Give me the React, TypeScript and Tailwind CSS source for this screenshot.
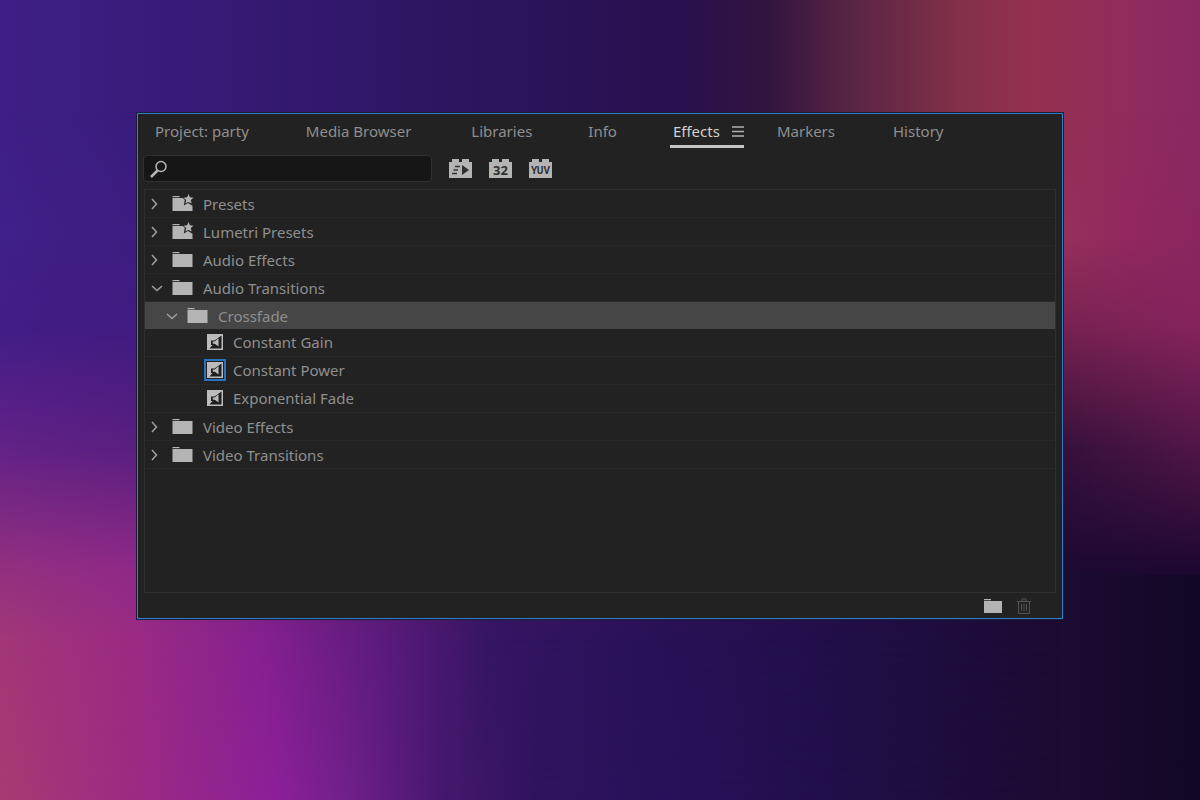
import { useState } from 'react';

const backdrop = [
  'bg-[linear-gradient(90deg,#3f1f87_0%,#3a1c7d_10%,#33186e_25%,#2c145c_42%,#28104f_56%,#33143f_64%,#592544_71%,#833048_80%,#95304f_86%,#902b5e_95%,#8a2865_100%)]',
  'bg-[linear-gradient(90deg,#40208a_0%,#3d1d80_11%,#2c145c_50%,#96315a_88%,#92285f_94%,#8b2560_100%)] [mask-image:linear-gradient(180deg,transparent_14%,black_28%)]',
  'bg-[linear-gradient(90deg,#421d88_0%,#411b80_11%,#2c145c_50%,#762250_88%,#85235e_100%)] [mask-image:linear-gradient(180deg,transparent_30%,black_41%)]',
  'bg-[linear-gradient(90deg,#632286_0%,#5a1f80_11%,#2c145c_50%,#35103b_88%,#511647_100%)] [mask-image:linear-gradient(180deg,transparent_41%,black_56%)]',
  'bg-[linear-gradient(90deg,#923080_0%,#8f2987_11%,#3d1560_40%,#1d0a32_88%,#1e0830_100%)] [mask-image:linear-gradient(180deg,transparent_56%,black_71%)]',
  'bg-[linear-gradient(90deg,#a23777_0%,#9a2a84_12%,#852091_22%,#5b1b7c_32%,#351565_41%,#2a1259_52%,#241050_63%,#1e0e43_75%,#1c0b32_88%,#130826_100%)] [mask-image:linear-gradient(180deg,transparent_71%,black_80%)]',
  'bg-[linear-gradient(90deg,#a83a72_0%,#9a2a84_12%,#8c1f98_23%,#70208a_29%,#45176e_37%,#2f135e_45%,#271159_57%,#1f0e45_73%,#1c0b32_88%,#120724_100%)] [mask-image:linear-gradient(180deg,transparent_80%,black_100%)]',
];

function Chevron({ open = false }: { open?: boolean }) {
  return (
    <svg viewBox="0 0 14 14" className="h-[14px] w-[14px] shrink-0 fill-none stroke-[#a0a0a0] stroke-[1.5]" aria-hidden="true">
      <path d={open ? 'M2 5l5 4.500 5-4.500' : 'M2 2l4.500 5L2 12'} />
    </svg>
  );
}

function Folder({ star = false }: { star?: boolean }) {
  return (
    <svg viewBox="0 0 22 18" className="h-[18px] w-[22px] shrink-0 fill-[#b4b4b4]" aria-hidden="true">
      <path d="M.5 2h7v1.200h-7z" />
      {star ? (
        <>
          <path d="M.5 4h10.300l2 2-1 5.500 4.200-2.500 4.500 2.800V17H.5z" />
          <path d="M16.500 0l1.400 3.300 3.600.4-2.700 2.400.8 3.500-3.100-1.700-3.100 1.700.8-3.500-2.700-2.400 3.600-.4z" />
        </>
      ) : (
        <path d="M.5 4h20v13H.5z" />
      )}
    </svg>
  );
}

function TransitionIcon({ selected = false }: { selected?: boolean }) {
  return (
    <span className={`flex h-[22px] w-[22px] shrink-0 items-center justify-center border-2 ${selected ? 'border-[#2a72bd]' : 'border-transparent'}`}>
      <svg viewBox="0 0 16 16" className="h-4 w-4" aria-hidden="true">
        <path d="M0 0h16v16H0z" fill="#bcbcbc" />
        <path d="M14.500 1.500v13H2.500l3-3.500H4V6.500h3.500z" fill="#1f1f1f" />
        <path d="M5.800 7.500h2L11.500 4v8.500L7.800 9.800h-2z" fill="#bcbcbc" />
      </svg>
    </span>
  );
}

function Badge({ kind }: { kind: 'fast' | '32' | 'YUV' }) {
  return (
    <svg viewBox="0 0 23 19" className="h-[19px] w-[23px]" aria-hidden="true">
      <path d="M0 3h3V0h7v3h3V0h7v3h3v16H0z" fill="#b4b4b4" />
      {kind === 'fast' ? (
        <>
          <path d="M13 6l7 5-7 5z" fill="#303030" />
          <path d="M6 7.500h5M4.500 11H9M3 14.500h5" stroke="#303030" strokeWidth="1.500" />
        </>
      ) : (
        <text
          x="11.500"
          y={kind === '32' ? 16 : 15}
          textAnchor="middle"
          fill="#303030"
          className={kind === '32' ? "font-['Noto_Sans'] text-[13px] font-bold" : "font-['Roboto'] text-[10px] font-bold"}
        >
          {kind}
        </text>
      )}
    </svg>
  );
}

const tabs = [
  { name: 'Project: party', gap: '' },
  { name: 'Media Browser', gap: 'ml-[57px]' },
  { name: 'Libraries', gap: 'ml-[60px]' },
  { name: 'Info', gap: 'ml-[56px]' },
  { name: 'Effects', gap: 'ml-[53px]' },
  { name: 'Markers', gap: 'ml-[33px]' },
  { name: 'History', gap: 'ml-[58px]' },
];

type Row = { name: string; kind: 'preset' | 'folder' | 'open' | 'child' | 'effect' };

const rows: Row[] = [
  { name: 'Presets', kind: 'preset' },
  { name: 'Lumetri Presets', kind: 'preset' },
  { name: 'Audio Effects', kind: 'folder' },
  { name: 'Audio Transitions', kind: 'open' },
  { name: 'Crossfade', kind: 'child' },
  { name: 'Constant Gain', kind: 'effect' },
  { name: 'Constant Power', kind: 'effect' },
  { name: 'Exponential Fade', kind: 'effect' },
  { name: 'Video Effects', kind: 'folder' },
  { name: 'Video Transitions', kind: 'folder' },
];

function TreeRow({ row }: { row: Row }) {
  const label = <span className="whitespace-nowrap">{row.name}</span>;
  if (row.kind === 'effect') {
    return (
      <li className="flex h-[28px] items-center gap-[7px] border-b border-[#282828] pb-0.5 pl-[59px]">
        <TransitionIcon selected={row.name === 'Constant Power'} />
        {label}
      </li>
    );
  }
  const open = row.kind === 'open' || row.kind === 'child';
  return (
    <li className={row.kind === 'child' ? 'h-[27px] bg-[#464646]' : 'h-[28px] border-b border-[#282828]'}>
      <button type="button" aria-expanded={open} className={`flex h-full w-full items-center ${row.kind === 'child' ? 'pl-5' : 'pl-[5px]'}`}>
        <Chevron open={open} />
        <span className="ml-2 mr-[9px] flex pb-0.5">
          <Folder star={row.kind === 'preset'} />
        </span>
        {label}
      </button>
    </li>
  );
}

export default function App() {
  const [active, setActive] = useState('Effects');
  const [query, setQuery] = useState('');

  return (
    <div className="relative isolate flex min-h-screen flex-col overflow-hidden px-[137px] pt-[113px] pb-[181px] font-['Noto_Sans',sans-serif] text-[15px] leading-5 text-[#8f8f8f]">
      <div className="absolute inset-0 -z-10" aria-hidden="true">
        {backdrop.map((layer) => (
          <div key={layer} className={`absolute inset-0 ${layer}`} />
        ))}
        <div className="absolute right-0 bottom-0 h-[225px] w-[140px] bg-linear-to-r from-[#1c0b32] to-[#120726]" />
      </div>

      <main className="flex flex-1 flex-col border border-[#2f7fc6] bg-[#222222] ring-1 ring-[#1b1c3a]">
        <nav className="flex h-[36px] pl-[17px]">
          {tabs.map((tab) => {
            const current = tab.name === active;
            return (
              <button
                key={tab.name}
                type="button"
                onClick={() => setActive(tab.name)}
                className={`flex h-[34px] items-center whitespace-nowrap ${tab.gap} ${tab.name === 'Effects' ? 'w-[74px] justify-between pl-[3px]' : ''} ${current ? 'border-b-3 border-[#c6c6c6] pt-[3px] text-[#d0d0d0]' : ''}`}
              >
                {tab.name}
                {tab.name === 'Effects' && (
                  <svg viewBox="0 0 12 12" className="h-3 w-3 stroke-[#b0b0b0] stroke-[1.5]" aria-hidden="true">
                    <path d="M0 2h12M0 6.500h12M0 11h12" />
                  </svg>
                )}
              </button>
            );
          })}
        </nav>

        <div className="flex h-[39px] items-center gap-[17px] pb-0.5 pl-[5px]">
          <div className="flex h-[27px] w-[289px] items-center rounded border border-[#303030] bg-[#161616] pl-[6px]">
            <svg viewBox="0 0 18 18" className="h-[18px] w-[18px] shrink-0 fill-none stroke-[#b4b4b4]" aria-hidden="true">
              <circle cx="11" cy="6.500" r="5" strokeWidth="1.500" />
              <path d="M7.500 10.500L1 17" strokeWidth="2.500" />
            </svg>
            <input
              type="text"
              aria-label="Search effects"
              value={query}
              onChange={(e) => setQuery(e.target.value)}
              className="min-w-0 flex-1 bg-transparent px-2 outline-none"
            />
          </div>
          <button type="button" aria-label="Accelerated effects"><Badge kind="fast" /></button>
          <button type="button" aria-label="32-bit color"><Badge kind="32" /></button>
          <button type="button" aria-label="YUV effects"><Badge kind="YUV" /></button>
        </div>

        <section className="mx-[6px] flex-1 border border-[#2f2f2f]">
          <ul>
            {rows.map((row) => (
              <TreeRow key={row.name} row={row} />
            ))}
          </ul>
        </section>

        <footer className="flex h-[25px] items-center justify-end gap-[13px] pr-[31px]">
          <button type="button" aria-label="New custom bin">
            <svg viewBox="0 0 20 16" className="h-4 w-5 fill-[#b4b4b4]" aria-hidden="true">
              <path d="M0 1h7v1.200H0zM0 3h18v12H0z" />
            </svg>
          </button>
          <button type="button" aria-label="Delete">
            <svg viewBox="0 0 14 16" className="h-4 w-[14px] fill-none stroke-[#555]" aria-hidden="true">
              <path d="M0 3.500h14M5 3V1h4v2M1.500 3.500v12h11v-12M4.500 6v7M7 6v7M9.500 6v7" />
            </svg>
          </button>
        </footer>
      </main>
    </div>
  );
}
